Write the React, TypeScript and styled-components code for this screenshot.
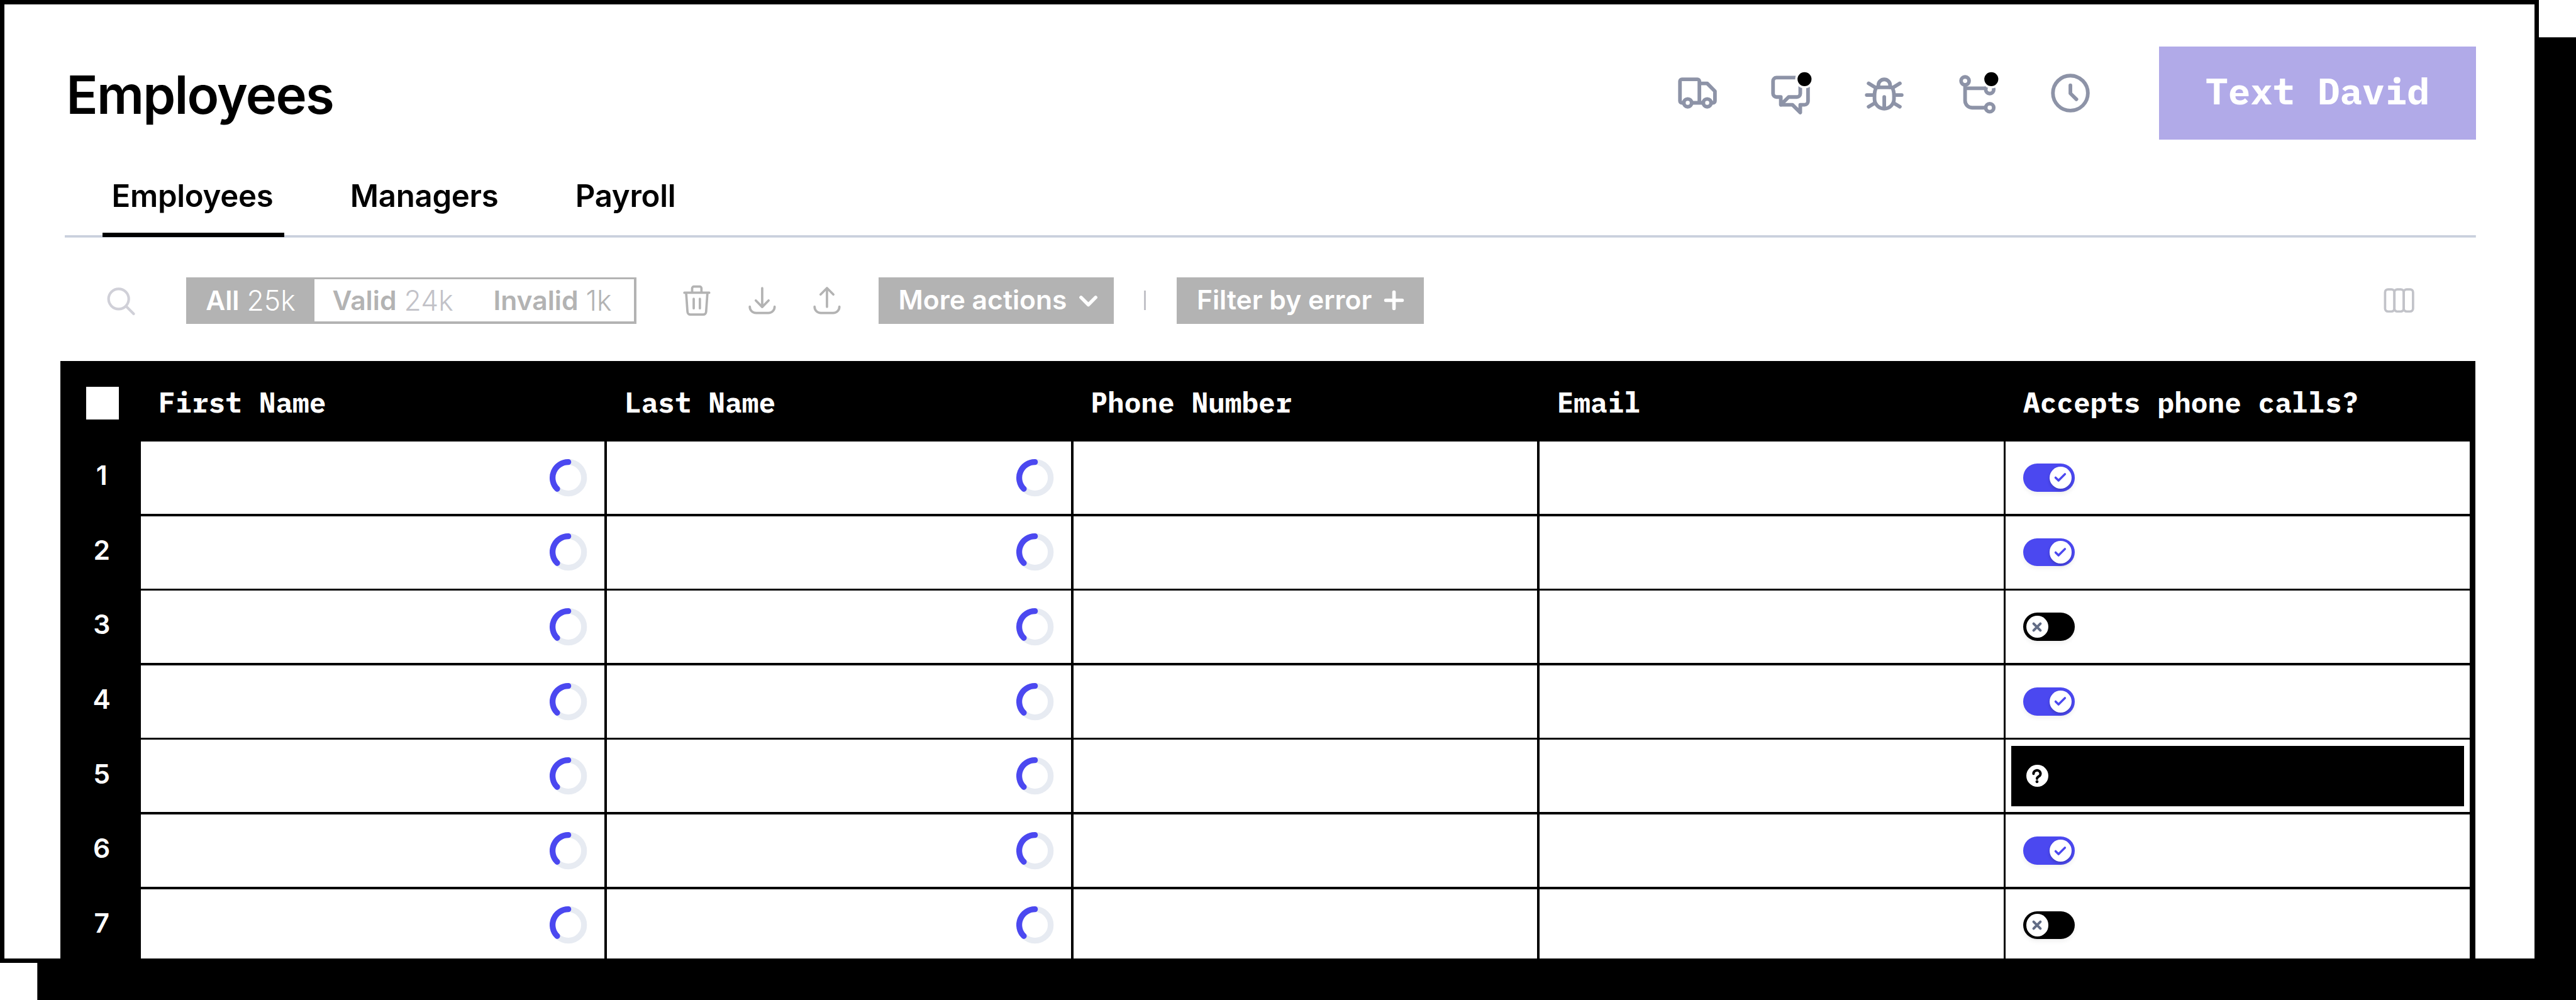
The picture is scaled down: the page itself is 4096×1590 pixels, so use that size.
import React from "react";
import styled, { createGlobalStyle } from "styled-components";

const sans = `Inter, "Liberation Sans", sans-serif`;
const mono = `"IBM Plex Mono", "Noto Sans Mono", "Liberation Mono", monospace`;
const accent = "#4b48f0";
const muted = "#b3b3b3";
const slate = "#8d93a7";

const Global = createGlobalStyle`
  html, body { margin: 0; padding: 0; background: #fff; overflow: hidden; }
  *, *::before, *::after { box-sizing: border-box; }
  button { border: 0; margin: 0; background: none; }
  svg { display: block; flex: none; overflow: visible; }
`;

const Page = styled.div`
  zoom: ${4096 / 4420};
  width: 4420px;
  height: 1716px;
  overflow: hidden;
  font-family: ${sans};
  color: #000;
`;

const Card = styled.main`
  width: 4356px;
  height: 1652px;
  border: 8px solid #000;
  background: #fff;
  box-shadow: 64px 64px 0 #000;
  display: flex;
  flex-direction: column;
`;

const Header = styled.header`
  flex: none;
  margin: 72px 100px 0 104px;
  height: 160px;
  display: flex;
  align-items: center;
`;

const Title = styled.h1`
  margin: 0;
  padding: 6px 0 0 2px;
  font-size: 90px;
  font-weight: 600;
  line-height: 1;
  letter-spacing: -1.9px;
`;

const HeaderIcons = styled.nav`
  margin-left: auto;
  margin-right: 112px;
  display: flex;
  gap: 80px;
`;

const PrimaryButton = styled.button`
  width: 544px;
  height: 160px;
  padding: 0 0 8px;
  background: #b1aae8;
  color: #fff;
  font: 700 64px/1 ${mono};
  white-space: nowrap;
`;

const Tabs = styled.div`
  flex: none;
  margin: 0 100px 0 104px;
  height: 168px;
  padding: 0 64px;
  display: flex;
  gap: 97px;
  background: linear-gradient(#c9d0dd, #c9d0dd) bottom / 100% 4px no-repeat;
`;

const Tab = styled.div<{ $active?: boolean }>`
  display: flex;
  align-items: center;
  justify-content: center;
  padding: 25px 19px 0 16px;
  font-size: 53px;
  font-weight: 600;
  letter-spacing: -0.3px;
  background: ${(p) => (p.$active ? "linear-gradient(#000, #000) bottom / 100% 8px no-repeat" : "none")};
`;

const Toolbar = styled.div`
  flex: none;
  height: 212px;
  padding: 4px 200px 0 168px;
  display: flex;
  align-items: center;
  font-size: 46px;
  font-weight: 600;
  color: ${muted};
`;

const Segments = styled.div`
  width: 772px;
  height: 80px;
  margin: 0 76px 0 80px;
  padding: 4px;
  background: ${muted};
  display: flex;
`;

const Segment = styled.div<{ $width: number; $active?: boolean }>`
  width: ${(p) => p.$width}px;
  display: flex;
  align-items: center;
  justify-content: center;
  padding-right: 3px;
  gap: 13px;
  background: ${(p) => (p.$active ? muted : "#fff")};
  color: ${(p) => (p.$active ? "#fff" : muted)};
`;

const Count = styled.span<{ $faint?: boolean }>`
  font-size: 48px;
  font-weight: 300;
  color: ${(p) => (p.$faint ? "#c2c2c8" : "inherit")};
`;

const ToolIcons = styled.div`
  display: flex;
  gap: 56px;
  margin-right: 60px;
`;

const ToolButton = styled.button<{ $width: number }>`
  width: ${(p) => p.$width}px;
  height: 80px;
  padding: 0 0 0 34px;
  background: ${muted};
  color: #fff;
  font: 600 46px/1 ${sans};
  display: flex;
  align-items: center;
  white-space: nowrap;
`;

const ToolButtonLabel = styled.span<{ $width: number }>`
  width: ${(p) => p.$width}px;
  text-align: left;
`;

const Divider = styled.i`
  width: 4px;
  height: 33px;
  margin: 0 53px 0 51px;
  background: #c2c2c8;
`;

const Spacer = styled.div`
  flex: 1;
`;

const Table = styled.section`
  flex: 1;
  min-height: 0;
  width: 4144px;
  margin-left: 96px;
  overflow: hidden;
  background: #000;
  color: #fff;
`;

const TableRow = styled.div<{ $head?: boolean }>`
  display: grid;
  grid-template-columns: 134px repeat(5, 796px);
  column-gap: 4px;
  height: ${(p) => (p.$head ? 138 : 124)}px;
  margin-bottom: ${(p) => (p.$head ? 0 : 4)}px;
`;

const HeadCell = styled.div`
  display: flex;
  align-items: center;
  padding: 2px 0 0 30px;
  font: 700 48px/1 ${mono};
`;

const SelectCell = styled.div`
  display: flex;
  align-items: center;
  padding: 6px 0 0 44px;
`;

const Checkbox = styled.div`
  width: 56px;
  height: 56px;
  background: #fff;
`;

const RowNumber = styled.div`
  display: flex;
  align-items: center;
  justify-content: center;
  padding: 0 0 8px 8px;
  font-size: 46px;
  font-weight: 600;
`;

const Cell = styled.div<{ $end?: boolean; $inset?: boolean }>`
  display: flex;
  align-items: center;
  justify-content: ${(p) => (p.$end ? "flex-end" : "flex-start")};
  padding: ${(p) => (p.$inset ? "10px" : "0 30px")};
  background: #fff;
`;

const UnknownFill = styled.div`
  flex: 1;
  height: 104px;
  padding-left: 25px;
  background: #000;
  display: flex;
  align-items: center;
`;

const Switch = styled.div<{ $on: boolean }>`
  width: 88px;
  height: 48px;
  padding: 0 5px;
  border-radius: 24px;
  background: ${(p) => (p.$on ? accent : "#000")};
  box-shadow: 0 4px 8px rgba(0, 0, 0, 0.06);
  display: flex;
  align-items: center;
  justify-content: ${(p) => (p.$on ? "flex-end" : "flex-start")};
`;

const Knob = styled.div`
  width: 38px;
  height: 38px;
  border-radius: 50%;
  background: #fff;
  box-shadow: 0 3px 6px rgba(0, 0, 0, 0.18);
  display: flex;
  align-items: center;
  justify-content: center;
`;

type IconProps = {
  size: number;
  color?: string;
  stroke?: number;
  children: React.ReactNode;
};

/* Icon coordinates are measured from the icon's centre. */
const Icon = ({ size, color = "currentColor", stroke = 4, children }: IconProps) => (
  <svg
    width={size}
    height={size}
    viewBox={`${-size / 2} ${-size / 2} ${size} ${size}`}
    fill="none"
    stroke={color}
    strokeWidth={stroke}
    strokeLinecap="round"
    strokeLinejoin="round"
  >
    {children}
  </svg>
);

const NotifyDot = () => (
  <>
    <circle cx="24" cy="-24" r="16" fill="#fff" stroke="none" />
    <circle cx="24" cy="-24" r="12" fill="#000" stroke="none" />
  </>
);

const TruckIcon = () => (
  <Icon size={80} color={slate} stroke={6.3}>
    <path d="M-23.5 16.7h-3.2a3.3 3.3 0 0 1-3.3-3.3V-20.4a3.3 3.3 0 0 1 3.3-3.3H0a3.3 3.3 0 0 1 3.3 3.3V16.7M-10 16.7H10M3.3-16.7H16.7L30-3.3V13.4a3.3 3.3 0 0 1-3.3 3.3H23.5" />
    <circle cx="-16.7" cy="16.7" r="6.7" />
    <circle cx="16.7" cy="16.7" r="6.7" />
  </Icon>
);

const ChatIcon = () => (
  <Icon size={80} color={slate} stroke={6.3}>
    <path d="M16.7-20V.7a6 6 0 0 1-6 6H-3.3L-16.7 20V6.7H-24a6 6 0 0 1-6-6V-20.7a6 6 0 0 1 6-6H12" />
    <path d="M-15 20H3.3L16.7 33.3V20H24a6 6 0 0 0 6-6V-14" />
    <NotifyDot />
  </Icon>
);

const BugIcon = () => (
  <Icon size={80} color={slate} stroke={6.3}>
    <path d="M-13.3-10H13.3C15.8-6 16.7-2 16.7 4V10A16.7 16.7 0 0 1-16.7 10V4C-16.7-2-15.8-6-13.3-10Z" />
    <path d="M-10-10V-14a10 9.5 0 0 1 20 0V-10M0 6.7V26M-30 3.3H-18M18 3.3H30M-26.8-16.7L-15-9.5M26.8-16.7L15-9.5M-26.8 23.3L-16 17M26.8 23.3L16 17" />
  </Icon>
);

const RouteIcon = () => (
  <Icon size={80} color={slate} stroke={6.3}>
    <circle cx="-21" cy="-21" r="6.9" />
    <circle cx="21.3" cy="-6.2" r="6.9" />
    <circle cx="21.3" cy="25" r="6.9" />
    <path d="M-21-14V13a12 12 0 0 0 12 12H14M-20-8.3H14" strokeLinecap="butt" />
    <NotifyDot />
  </Icon>
);

const ClockIcon = () => (
  <Icon size={80} color={slate} stroke={6.3}>
    <circle r="30" />
    <path d="M0-13.3V0.5L10.3 10.5" />
  </Icon>
);

const SearchIcon = () => (
  <Icon size={64} color="#d0d0d8" stroke={4.5}>
    <circle cx="-4.3" cy="-2.5" r="17.3" />
    <path d="M8.5 10L21.5 23" />
  </Icon>
);

const TrashIcon = () => (
  <Icon size={56}>
    <path d="M-21.3-13.5H21.3M-8-14V-21a3 3 0 0 1 3-3H5a3 3 0 0 1 3 3V-14M-18.3-13.5L-16 19a5 5 0 0 0 5 5H11a5 5 0 0 0 5-5L18.3-13.5M-5.3-3V13.3M5.3-3V13.3" />
  </Icon>
);

const tray = "M-21.3 10.5a10.7 10.7 0 0 0 10.7 10.8H10.6a10.7 10.7 0 0 0 10.7-10.8";

const DownloadIcon = () => (
  <Icon size={56}>
    <path d={`M0-21.3V11M-11-.2L0 11L11-.2${tray}`} />
  </Icon>
);

const UploadIcon = () => (
  <Icon size={56}>
    <path d={`M0 10.7V-21.5M-11-10.5L0-21.5L11-10.5${tray}`} />
  </Icon>
);

const ColumnsIcon = () => (
  <Icon size={64} color="#c2c3c9">
    {[-24, -8, 8].map((x) => (
      <rect key={x} x={x} y="-19" width="16" height="38" rx="5" />
    ))}
  </Icon>
);

const Spinner = () => (
  <Icon size={64} stroke={10}>
    <circle r="27" stroke="#e7ebf2" />
    <path d="M0-27A27 27 0 0 0-19.1 19.1" stroke={accent} />
  </Icon>
);

const Toggle = ({ on }: { on: boolean }) => (
  <Switch $on={on}>
    <Knob>
      {on ? (
        <Icon size={28} color={accent} stroke={3.8}>
          <path d="M-8 0.5L-3 5.5L8-5.5" />
        </Icon>
      ) : (
        <Icon size={28} color="#636d86" stroke={4.4}>
          <path d="M-5.8-5.8L5.8 5.8M5.8-5.8L-5.8 5.8" />
        </Icon>
      )}
    </Knob>
  </Switch>
);

const columns = ["First Name", "Last Name", "Phone Number", "Email", "Accepts phone calls?"];
const accepts: (boolean | null)[] = [true, true, false, true, null, true, false];

export default function App() {
  return (
    <Page>
      <Global />
      <Card>
        <Header>
          <Title>Employees</Title>
          <HeaderIcons>
            <TruckIcon />
            <ChatIcon />
            <BugIcon />
            <RouteIcon />
            <ClockIcon />
          </HeaderIcons>
          <PrimaryButton>Text David</PrimaryButton>
        </Header>

        <Tabs>
          <Tab $active>Employees</Tab>
          <Tab>Managers</Tab>
          <Tab>Payroll</Tab>
        </Tabs>

        <Toolbar>
          <SearchIcon />
          <Segments>
            <Segment $width={216} $active>
              All <Count>25k</Count>
            </Segment>
            <Segment $width={272}>
              Valid <Count $faint>24k</Count>
            </Segment>
            <Segment $width={276}>
              Invalid <Count>1k</Count>
            </Segment>
          </Segments>
          <ToolIcons>
            <TrashIcon />
            <DownloadIcon />
            <UploadIcon />
          </ToolIcons>
          <ToolButton $width={404}>
            <ToolButtonLabel $width={306}>More actions</ToolButtonLabel>
            <Icon size={40} stroke={6}>
              <path d="M-12.5-5L0 7.5L12.5-5" />
            </Icon>
          </ToolButton>
          <Divider />
          <ToolButton $width={424}>
            <ToolButtonLabel $width={318}>Filter by error</ToolButtonLabel>
            <Icon size={40} stroke={6}>
              <path d="M-14 0H14M0-14V14" />
            </Icon>
          </ToolButton>
          <Spacer />
          <ColumnsIcon />
        </Toolbar>

        <Table>
          <TableRow $head>
            <SelectCell>
              <Checkbox />
            </SelectCell>
            {columns.map((name) => (
              <HeadCell key={name}>{name}</HeadCell>
            ))}
          </TableRow>
          {accepts.map((value, i) => (
            <TableRow key={i}>
              <RowNumber>{i + 1}</RowNumber>
              <Cell $end>
                <Spinner />
              </Cell>
              <Cell $end>
                <Spinner />
              </Cell>
              <Cell />
              <Cell />
              <Cell $inset={value === null}>
                {value === null ? (
                  <UnknownFill>
                    <Knob>
                      <Icon size={28} color="#000" stroke={4.4}>
                        <path d="M-6-4a6 5.6 0 1 1 9 4.6C1 1.8 0 2.6 0 4.4" />
                        <circle cy="9.6" r="2.6" fill="#000" stroke="none" />
                      </Icon>
                    </Knob>
                  </UnknownFill>
                ) : (
                  <Toggle on={value} />
                )}
              </Cell>
            </TableRow>
          ))}
        </Table>
      </Card>
    </Page>
  );
}
